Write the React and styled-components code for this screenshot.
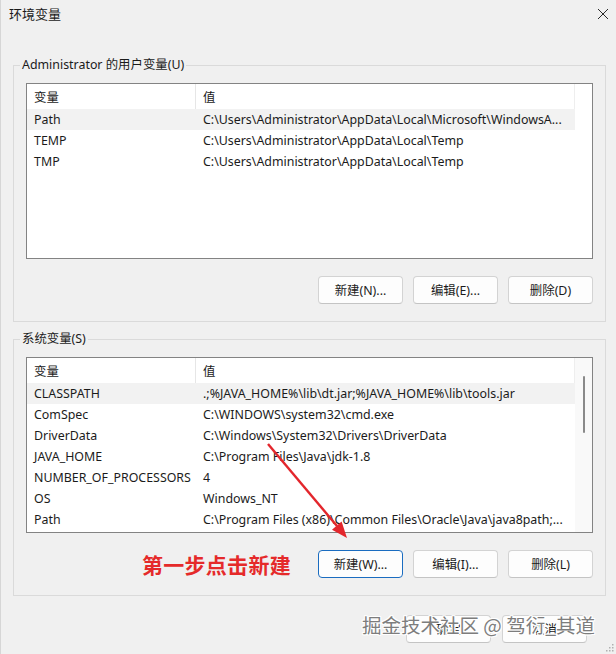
import React from "react";
import styled, { createGlobalStyle } from "styled-components";

const Global = createGlobalStyle`
  html, body { margin: 0; padding: 0; background: #f0f0f0; }
  * { box-sizing: border-box; }
`;

const FONT = `"Noto Sans", "Noto Sans CJK SC", sans-serif`;

const Window = styled.div`
  position: relative;
  width: 616px;
  height: 654px;
  background: #f0f0f0;
  font-family: ${FONT};
  color: #1b1b1b;
  font-size: 12.4px;
  display: flex;
  flex-direction: column;
  overflow: hidden;
  border-left: 1px solid #d6d6d6;
`;

const TitleBar = styled.div`
  height: 28px;
  display: flex;
  align-items: center;
  justify-content: space-between;
  padding: 0 7px 0 8px;
`;

const Title = styled.div`
  font-size: 13px;
  line-height: 16px;
  color: #1a1a1a;
`;

const Group = styled.fieldset`
  margin: ${(p) => p.$top}px 10px 0 12px;
  padding: 0;
  border: 1px solid #dadada;
  min-width: 0;
`;

const Legend = styled.legend`
  margin-left: 6px;
  padding: 0 2px;
  font-size: 12.4px;
  line-height: 16px;
  color: #1b1b1b;
`;

const GroupBody = styled.div`
  padding: 10px 12px ${(p) => p.$bottom}px 12px;
  display: flex;
  flex-direction: column;
`;

const ListBox = styled.div`
  height: 176px;
  border: 1px solid #838383;
  background: #fff;
  display: flex;
`;

const Table = styled.div`
  flex: 1;
  display: flex;
  flex-direction: column;
`;

const HeaderRow = styled.div`
  height: 25px;
  display: grid;
  grid-template-columns: 169px 1fr;
  border-right: 1px solid #eeeeee;
`;

const HeaderCell = styled.div`
  display: flex;
  align-items: center;
  padding-left: 7px;
  border-right: ${(p) => (p.$sep ? "1px solid #e6e6e6" : "none")};
`;

const Row = styled.div`
  height: 21px;
  display: grid;
  grid-template-columns: 169px 1fr;
  align-items: center;
  background: ${(p) => (p.$selected ? "#f2f2f2" : "transparent")};
`;

const Cell = styled.div`
  padding-left: 7px;
  white-space: nowrap;
  overflow: hidden;
  line-height: 16px;
`;

const Track = styled.div`
  width: 17px;
  background: ${(p) => (p.$active ? "#f9f9f9" : "#fff")};
  display: flex;
  justify-content: center;
  padding-top: 18px;
`;

const Thumb = styled.div`
  width: 2px;
  height: 57px;
  border-radius: 1px;
  background: #8a8a8a;
`;

const ButtonRow = styled.div`
  margin-top: ${(p) => p.$gap}px;
  display: flex;
  justify-content: flex-end;
  align-items: center;
  gap: 10px;
`;

const Button = styled.button`
  width: 85px;
  height: 28px;
  padding: 0;
  font-family: ${FONT};
  font-size: 12.4px;
  color: #1b1b1b;
  background: #fdfdfd;
  border: 1px solid ${(p) => (p.$primary ? "#1a6cc0" : "#d3d3d3")};
  border-bottom-color: ${(p) => (p.$primary ? "#1a6cc0" : "#c4c4c4")};
  border-radius: 4px;
`;

const Annotation = styled.div`
  margin-right: 17px;
  font-size: 21px;
  font-weight: 700;
  color: #e52a2a;
  letter-spacing: 0.3px;
  font-family: "Noto Sans CJK SC", sans-serif;
`;

const Footer = styled.div`
  margin-top: 19px;
  display: flex;
  justify-content: flex-end;
  gap: 11px;
  padding-right: 29px;
`;

const Overlay = styled.svg`
  position: absolute;
  left: 0;
  top: 0;
  pointer-events: none;
`;

const Watermark = styled.div`
  position: absolute;
  left: 361px;
  top: 612px;
  font-family: "Noto Sans CJK SC", sans-serif;
  font-size: 19.5px;
  line-height: 26px;
  color: #7d7d7d;
  white-space: nowrap;
  text-shadow: 1px 0 0 #fff, -1px 0 0 #fff, 0 1px 0 #fff, 0 -1px 0 #fff,
    1px 1px 0 #fff, -1px -1px 0 #fff, 1px -1px 0 #fff, -1px 1px 0 #fff;
  pointer-events: none;
`;

const Grip = styled.svg`
  position: absolute;
  right: 2px;
  bottom: 2px;
`;

const userVars = [
  ["Path", "C:\\Users\\Administrator\\AppData\\Local\\Microsoft\\WindowsA..."],
  ["TEMP", "C:\\Users\\Administrator\\AppData\\Local\\Temp"],
  ["TMP", "C:\\Users\\Administrator\\AppData\\Local\\Temp"],
];

const sysVars = [
  ["CLASSPATH", ".;%JAVA_HOME%\\lib\\dt.jar;%JAVA_HOME%\\lib\\tools.jar"],
  ["ComSpec", "C:\\WINDOWS\\system32\\cmd.exe"],
  ["DriverData", "C:\\Windows\\System32\\Drivers\\DriverData"],
  ["JAVA_HOME", "C:\\Program Files\\Java\\jdk-1.8"],
  ["NUMBER_OF_PROCESSORS", "4"],
  ["OS", "Windows_NT"],
  ["Path", "C:\\Program Files (x86)\\Common Files\\Oracle\\Java\\java8path;..."],
];

function VarList({ rows, scroll }) {
  return (
    <ListBox>
      <Table>
        <HeaderRow>
          <HeaderCell $sep>变量</HeaderCell>
          <HeaderCell>值</HeaderCell>
        </HeaderRow>
        {rows.map(([k, v], i) => (
          <Row key={k + i} $selected={i === 0}>
            <Cell>{k}</Cell>
            <Cell>{v}</Cell>
          </Row>
        ))}
      </Table>
      <Track $active={scroll}>{scroll && <Thumb />}</Track>
    </ListBox>
  );
}

export default function App() {
  return (
    <>
      <Global />
      <Window>
        <TitleBar>
          <Title>环境变量</Title>
          <svg width="12" height="12" viewBox="0 0 12 12">
            <path d="M1 1 L11 11 M11 1 L1 11" stroke="#2a2a2a" strokeWidth="1" fill="none" />
          </svg>
        </TitleBar>

        <Group $top={29}>
          <Legend>Administrator 的用户变量(U)</Legend>
          <GroupBody $bottom={17}>
            <VarList rows={userVars} />
            <ButtonRow $gap={17}>
              <Button>新建(N)...</Button>
              <Button>编辑(E)...</Button>
              <Button>删除(D)</Button>
            </ButtonRow>
          </GroupBody>
        </Group>

        <Group $top={9}>
          <Legend>系统变量(S)</Legend>
          <GroupBody $bottom={16}>
            <VarList rows={sysVars} scroll />
            <ButtonRow $gap={16}>
              <Annotation>第一步点击新建</Annotation>
              <Button $primary>新建(W)...</Button>
              <Button>编辑(I)...</Button>
              <Button>删除(L)</Button>
            </ButtonRow>
          </GroupBody>
        </Group>

        <Footer>
          <Button>确定</Button>
          <Button>取消</Button>
        </Footer>

        <Overlay width="616" height="654" viewBox="0 0 616 654">
          <line x1="267" y1="444" x2="336" y2="526" stroke="#e3262c" strokeWidth="2.4" />
          <polygon points="346,538 340.6,521.6 331.0,529.7" fill="#e3262c" />
        </Overlay>

        <Watermark>掘金技术社区 @ 驾衍_其道</Watermark>

        <Grip width="8" height="8" viewBox="0 0 8 8">
          <rect x="6" y="0" width="1.5" height="1.5" fill="#b0b0b0" />
          <rect x="3" y="3" width="1.5" height="1.5" fill="#b0b0b0" />
          <rect x="6" y="3" width="1.5" height="1.5" fill="#b0b0b0" />
          <rect x="0" y="6" width="1.5" height="1.5" fill="#b0b0b0" />
          <rect x="3" y="6" width="1.5" height="1.5" fill="#b0b0b0" />
          <rect x="6" y="6" width="1.5" height="1.5" fill="#b0b0b0" />
        </Grip>
      </Window>
    </>
  );
}
